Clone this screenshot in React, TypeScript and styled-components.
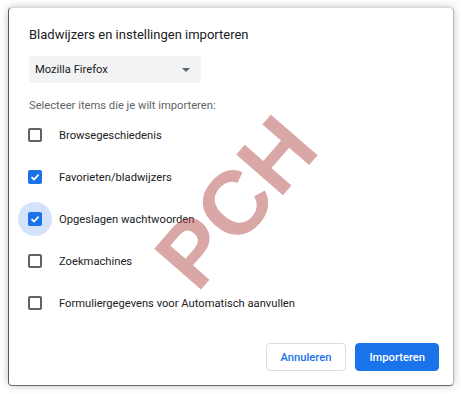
import styled, { createGlobalStyle } from 'styled-components'

const GlobalStyle = createGlobalStyle`
	html,
	body {
		margin: 0;
		padding: 0;
		background: #ffffff;
		font-family: Roboto, 'Liberation Sans', Arial, sans-serif;
	}

	* {
		box-sizing: border-box;
	}
`

const Page = styled.div`
	width: 461px;
	height: 394px;
	padding: 8px 0 0 9px;
`

const Dialog = styled.div`
	position: relative;
	width: 444px;
	height: 377px;
	background: #ffffff;
	border-radius: 3px;
	padding: 18px 14px 14px 20px;
	display: flex;
	flex-direction: column;
	overflow: hidden;
	box-shadow: -1px 0 0 #5a5a5a, 0 1px 0 #6a6a6a, 1px 0 0 #b8b8b8,
		0 -1px 0 #d8d8d8, 0 0 8px rgba(0, 0, 0, 0.3);
`

const Title = styled.h1`
	margin: 0;
	font-size: 13px;
	font-weight: 400;
	line-height: 18px;
	color: #202124;
`

const Select = styled.div`
	margin-top: 12px;
	width: 172px;
	height: 27px;
	background: #f1f3f4;
	border-radius: 4px;
	display: flex;
	align-items: center;
	justify-content: space-between;
	padding: 0 8px 0 6px;
	font-size: 11.2px;
	color: #202124;
`

const Caret = styled.span`
	width: 0;
	height: 0;
	border-left: 4px solid transparent;
	border-right: 4px solid transparent;
	border-top: 4px solid #5f6368;
	margin-right: 3px;
`

const Subtitle = styled.div`
	margin-top: 15px;
	font-size: 11.2px;
	line-height: 16px;
	color: #5f6368;
`

const List = styled.div`
	display: flex;
	flex-direction: column;
`

const Row = styled.label`
	height: 42px;
	display: flex;
	align-items: center;
	gap: 17px;
	margin-left: -1px;
	font-size: 11.2px;
	color: #202124;
`

const BoxWrap = styled.span<{ $focus?: boolean }>`
	position: relative;
	width: 14px;
	height: 14px;
	flex: none;

	&::before {
		content: '';
		display: ${(p) => (p.$focus ? 'block' : 'none')};
		position: absolute;
		left: -10px;
		top: -10px;
		width: 34px;
		height: 34px;
		border-radius: 50%;
		background: #d3e3fb;
	}
`

const Box = styled.span<{ $checked?: boolean }>`
	position: relative;
	display: flex;
	align-items: center;
	justify-content: center;
	width: 14px;
	height: 14px;
	border-radius: 2px;
	border: 2px solid ${(p) => (p.$checked ? '#1a73e8' : '#5f6368')};
	background: ${(p) => (p.$checked ? '#1a73e8' : '#ffffff')};
`

const Footer = styled.div`
	margin-top: auto;
	display: flex;
	justify-content: flex-end;
	gap: 8px;
`

const Button = styled.button<{ $primary?: boolean }>`
	height: 28px;
	padding: 0 ${(p) => (p.$primary ? '13px' : '14px')};
	margin-right: ${(p) => (p.$primary ? '0' : '1px')};
	border-radius: 4px;
	font-family: Roboto, 'Liberation Sans', Arial, sans-serif;
	font-size: 11.2px;
	font-weight: 500;
	border: 1px solid ${(p) => (p.$primary ? '#1a73e8' : '#dadce0')};
	background: ${(p) => (p.$primary ? '#1a73e8' : '#ffffff')};
	color: ${(p) => (p.$primary ? '#ffffff' : '#1a73e8')};
`

const Watermark = styled.div`
	position: absolute;
	left: 227px;
	top: 194px;
	transform: translate(-50%, -50%) rotate(-49deg);
	font-family: 'Liberation Sans', Arial, sans-serif;
	font-weight: 700;
	font-size: 90px;
	line-height: 1;
	color: rgba(178, 72, 72, 0.48);
	pointer-events: none;
	white-space: nowrap;
`

const items = [
	{ label: 'Browsegeschiedenis', checked: false },
	{ label: 'Favorieten/bladwijzers', checked: true },
	{ label: 'Opgeslagen wachtwoorden', checked: true, focus: true },
	{ label: 'Zoekmachines', checked: false },
	{ label: 'Formuliergegevens voor Automatisch aanvullen', checked: false }
]

function Check() {
	return (
		<svg width='10' height='10' viewBox='0 0 10 10'>
			<path
				d='M1.5 5.2 L4 7.5 L8.6 2.6'
				fill='none'
				stroke='#ffffff'
				strokeWidth='1.7'
			/>
		</svg>
	)
}

export default function App() {
	return (
		<>
			<GlobalStyle />
			<Page>
				<Dialog>
					<Title>Bladwijzers en instellingen importeren</Title>
					<Select>
						Mozilla Firefox
						<Caret />
					</Select>
					<Subtitle>Selecteer items die je wilt importeren:</Subtitle>
					<List>
						{items.map((item) => (
							<Row key={item.label}>
								<BoxWrap $focus={item.focus}>
									<Box $checked={item.checked}>
										{item.checked && <Check />}
									</Box>
								</BoxWrap>
								{item.label}
							</Row>
						))}
					</List>
					<Footer>
						<Button>Annuleren</Button>
						<Button $primary>Importeren</Button>
					</Footer>
					<Watermark>PCH</Watermark>
				</Dialog>
			</Page>
		</>
	)
}
